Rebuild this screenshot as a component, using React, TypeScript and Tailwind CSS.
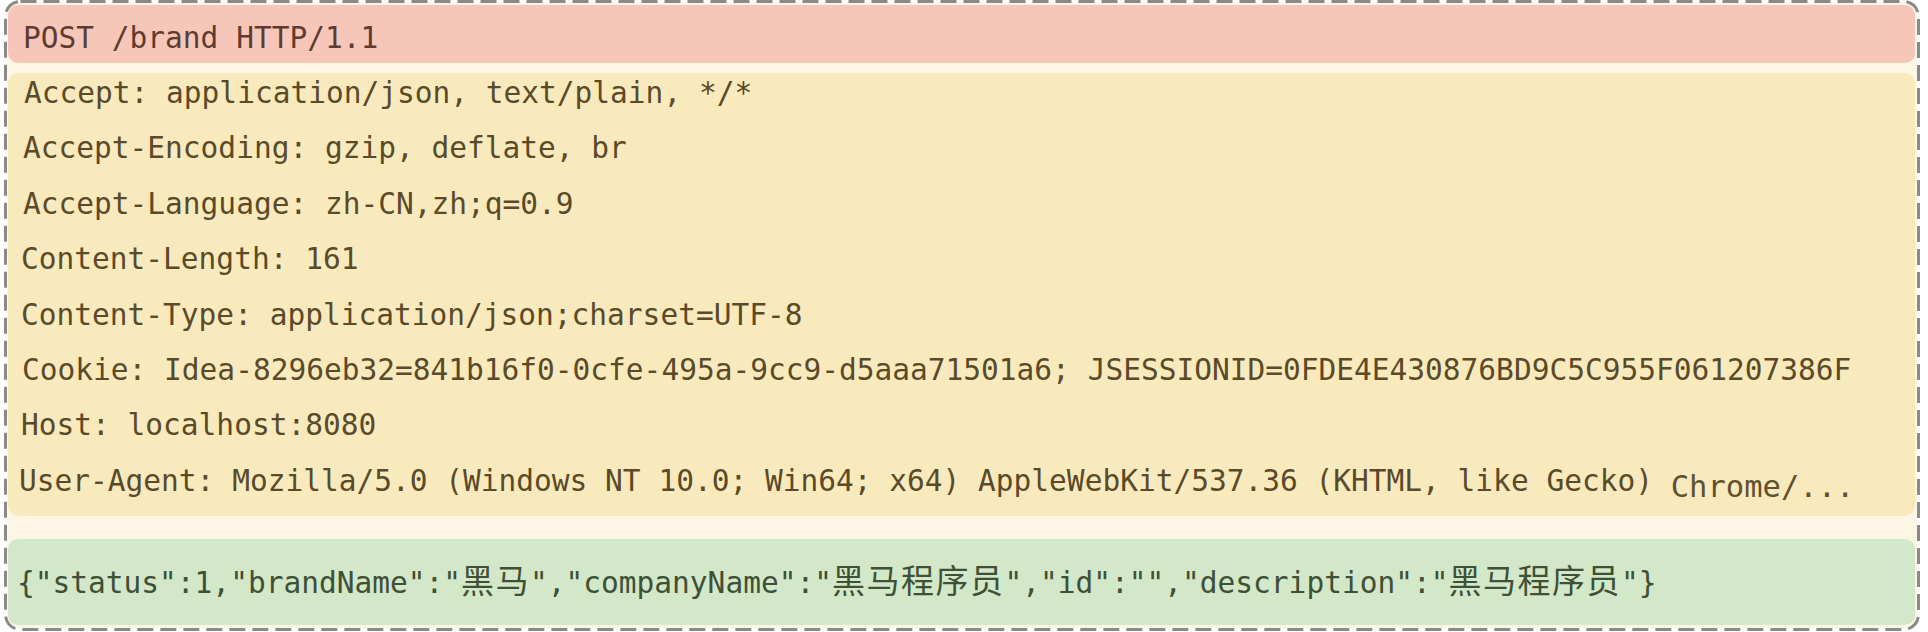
import * as React from 'react';

const mono = '[font-family:"DejaVu_Sans_Mono","Noto_Sans_CJK_SC",monospace]';

// header rows of the request, with their own left indent (the capture drifts a bit)
const headers = [
  { text: 'Accept: application/json, text/plain, */*', indent: 'pl-[16px]' },
  { text: 'Accept-Encoding: gzip, deflate, br', indent: 'pl-[15px]' },
  { text: 'Accept-Language: zh-CN,zh;q=0.9', indent: 'pl-[15px]' },
  { text: 'Content-Length: 161', indent: 'pl-[13px]' },
  { text: 'Content-Type: application/json;charset=UTF-8', indent: 'pl-[13px]' },
  {
    text: 'Cookie: Idea-8296eb32=841b16f0-0cfe-495a-9cc9-d5aaa71501a6; JSESSIONID=0FDE4E430876BD9C5C955F061207386F',
    indent: 'pl-[14px]',
  },
  { text: 'Host: localhost:8080', indent: 'pl-[13px]' },
];

function Cjk({ children }: { children: React.ReactNode }) {
  return <span className="text-[33px] tracking-[1.5px]">{children}</span>;
}

export default function App() {
  return (
    <div className="w-[1928px] h-[632px] bg-white pl-[4px] pr-[8px]">
      <div className="relative h-[631px] p-[3px]">
        {/* dashed frame */}
        <svg className="absolute inset-0 w-full h-full pointer-events-none" aria-hidden="true">
          <rect
            x="1.5"
            y="1.5"
            rx="15"
            className="w-[calc(100%-3px)] h-[calc(100%-3px)]"
            fill="none"
            stroke="#8a8a8a"
            strokeWidth="3"
            strokeDasharray="16 7"
          />
        </svg>

        <div
          className={`h-full flex flex-col bg-[#fef6e5] rounded-[13px] pt-[2px] pl-[1px] pr-[2px] pb-[3px] text-[29.5px] whitespace-pre ${mono}`}
        >
          {/* request line */}
          <div className="h-[58px] shrink-0 rounded-[10px] bg-[#f6c7b9] pl-[15px] pt-[13px] leading-[40px] text-[#5e3b31]">
            POST /brand HTTP/1.1
          </div>

          {/* headers */}
          <div className="mt-[10px] h-[443px] shrink-0 flex flex-col rounded-[10px] bg-[#f9eabd] text-[#5a4a29]">
            {headers.map((h) => (
              <div key={h.text} className={`flex-1 leading-[40px] ${h.indent}`}>
                {h.text}
              </div>
            ))}
            <div className="flex-1 leading-[40px] pl-[11px]">
              User-Agent: Mozilla/5.0 (Windows NT 10.0; Win64; x64) AppleWebKit/537.36 (KHTML, like Gecko){' '}
              <span className="relative top-[6px] text-[30.5px] text-[#5f5130]">Chrome/...</span>
            </div>
          </div>

          {/* body */}
          <div className="mt-[23px] flex-1 rounded-[10px] bg-[#d3e7c9] pl-[9px] pt-[23px] leading-[40px] text-[#3e5035]">
            {'{"status":1,"brandName":"'}
            <Cjk>黑马</Cjk>
            {'","companyName":"'}
            <Cjk>黑马程序员</Cjk>
            {'","id":"","description":"'}
            <Cjk>黑马程序员</Cjk>
            {'"}'}
          </div>
        </div>
      </div>
    </div>
  );
}
